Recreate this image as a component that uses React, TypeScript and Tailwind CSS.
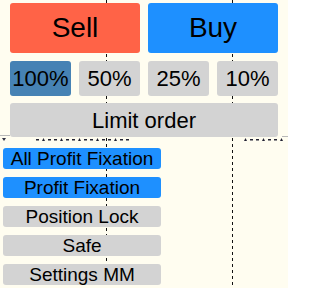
import React from "react";

const font = { fontFamily: '"Liberation Sans", Arial, sans-serif' };

function ChartGrid() {
  // chart behind the trade panel: two dashed period separators and a price line
  const marks = [36, 42, 48, 54, 60, 66, 72, 78, 84, 90, 96, 102, 108, 114, 120, 126, 244, 250, 256, 262, 268, 274, 280];
  return (
    <svg className="absolute inset-0" width={288} height={288} viewBox="0 0 288 288">
      <line x1={106.5} y1={0} x2={106.5} y2={288} stroke="#111" strokeWidth={1} strokeDasharray="3 3" />
      <line x1={232.5} y1={0} x2={232.5} y2={288} stroke="#111" strokeWidth={1} strokeDasharray="3 3" />
      <line x1={0} y1={135.5} x2={10} y2={135.5} stroke="#b8b8b8" strokeWidth={1} />
      <line x1={282} y1={136.5} x2={288} y2={136.5} stroke="#b8b8b8" strokeWidth={1} />
      <polygon points="2,138 6,138 4,141" fill="#334" />
      {marks.map((x, i) =>
        i % 3 === 1 ? (
          <polygon key={x} points={`${x},141 ${x + 3},141 ${x + 1.5},138`} fill="#223" />
        ) : (
          <rect key={x} x={x} y={139} width={3} height={1.5} fill="#223" />
        )
      )}
    </svg>
  );
}

function SideButton({ label, active }: { label: string; active?: boolean }) {
  return (
    <button
      className={
        active
          ? "h-[21px] w-[158px] rounded-[3px] bg-[#1e90ff] text-[19px] leading-none text-black flex items-center justify-center"
          : "h-[21px] w-[158px] rounded-[3px] bg-[#d3d3d3] text-[19px] leading-none text-black flex items-center justify-center"
      }
      style={font}
    >
      {label}
    </button>
  );
}

export default function App() {
  const pcts = ["100%", "50%", "25%", "10%"];
  return (
    <div className="relative w-[288px] h-[288px] overflow-hidden bg-[#fffdf0]">
      <ChartGrid />
      <div className="relative flex flex-col" style={font}>
        <div className="px-[10px] pt-[3px] flex flex-col">
          <div className="flex gap-2">
            <button className="h-[50px] w-[132px] rounded-[3px] bg-[#ff6347] text-[28px] text-black flex items-center justify-center">
              Sell
            </button>
            <button className="h-[50px] w-[132px] rounded-[3px] bg-[#1e90ff] text-[28px] text-black flex items-center justify-center">
              Buy
            </button>
          </div>
          <div className="mt-2 grid grid-cols-4 gap-2">
            {pcts.map((p, i) => (
              <button
                key={p}
                className={
                  i === 0
                    ? "h-[35px] rounded-[3px] bg-[#4682b4] text-[22px] text-black flex items-center justify-center"
                    : "h-[35px] rounded-[3px] bg-[#d3d3d3] text-[22px] text-black flex items-center justify-center"
                }
              >
                {p}
              </button>
            ))}
          </div>
          <button className="mt-[7px] h-[34px] rounded-[3px] bg-[#d3d3d3] text-[22px] text-black flex items-center justify-center">
            Limit order
          </button>
        </div>
        <div className="mt-[11px] pl-[3px] flex flex-col gap-2">
          <SideButton label="All Profit Fixation" active />
          <SideButton label="Profit Fixation" active />
          <SideButton label="Position Lock" />
          <SideButton label="Safe" />
          <SideButton label="Settings MM" />
        </div>
      </div>
    </div>
  );
}
